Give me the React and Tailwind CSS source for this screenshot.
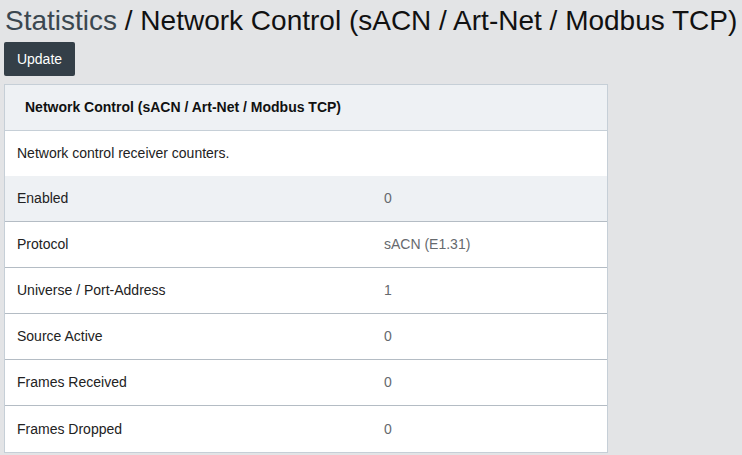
export default function App() {
  const rows = [
    ["Enabled", "0"],
    ["Protocol", "sACN (E1.31)"],
    ["Universe / Port-Address", "1"],
    ["Source Active", "0"],
    ["Frames Received", "0"],
    ["Frames Dropped", "0"],
  ];
  return (
    <div className="min-h-[455px] bg-[#e3e4e6] font-['Liberation_Sans',Arial,sans-serif] pl-[4px] pt-[3px]">
      <h1 className="text-[28px] leading-[36px] pl-[1px] text-[#111] whitespace-nowrap">
        <span className="text-[#3b4750]">Statistics</span> / Network Control (sACN / Art-Net / Modbus TCP)
      </h1>
      <button className="mt-[3px] h-[34px] w-[71px] rounded-[2px] bg-[#343f48] text-white text-[14px]">
        Update
      </button>
      <div className="mt-[8px] w-[604px] border border-[#c6cfd7] bg-white">
        <div className="h-[46px] bg-[#eef1f4] border-b border-[#c6cfd7] flex items-center pl-[20px] text-[14px] font-bold text-[#111]">
          Network Control (sACN / Art-Net / Modbus TCP)
        </div>
        <div className="h-[45px] flex items-center pl-[12px] text-[14px] text-[#222]">
          Network control receiver counters.
        </div>
        {rows.map(([k, v], i) => (
          <div
            key={k}
            className={`h-[46px] flex items-center text-[14px] ${i === 0 ? "bg-[#eef1f4]" : "bg-white"} ${i < rows.length - 1 ? "border-b border-[#b4bcc4]" : ""}`}
          >
            <div className="w-[379px] pl-[12px] text-[#222]">{k}</div>
            <div className="text-[#666a6e]">{v}</div>
          </div>
        ))}
      </div>
    </div>
  );
}
